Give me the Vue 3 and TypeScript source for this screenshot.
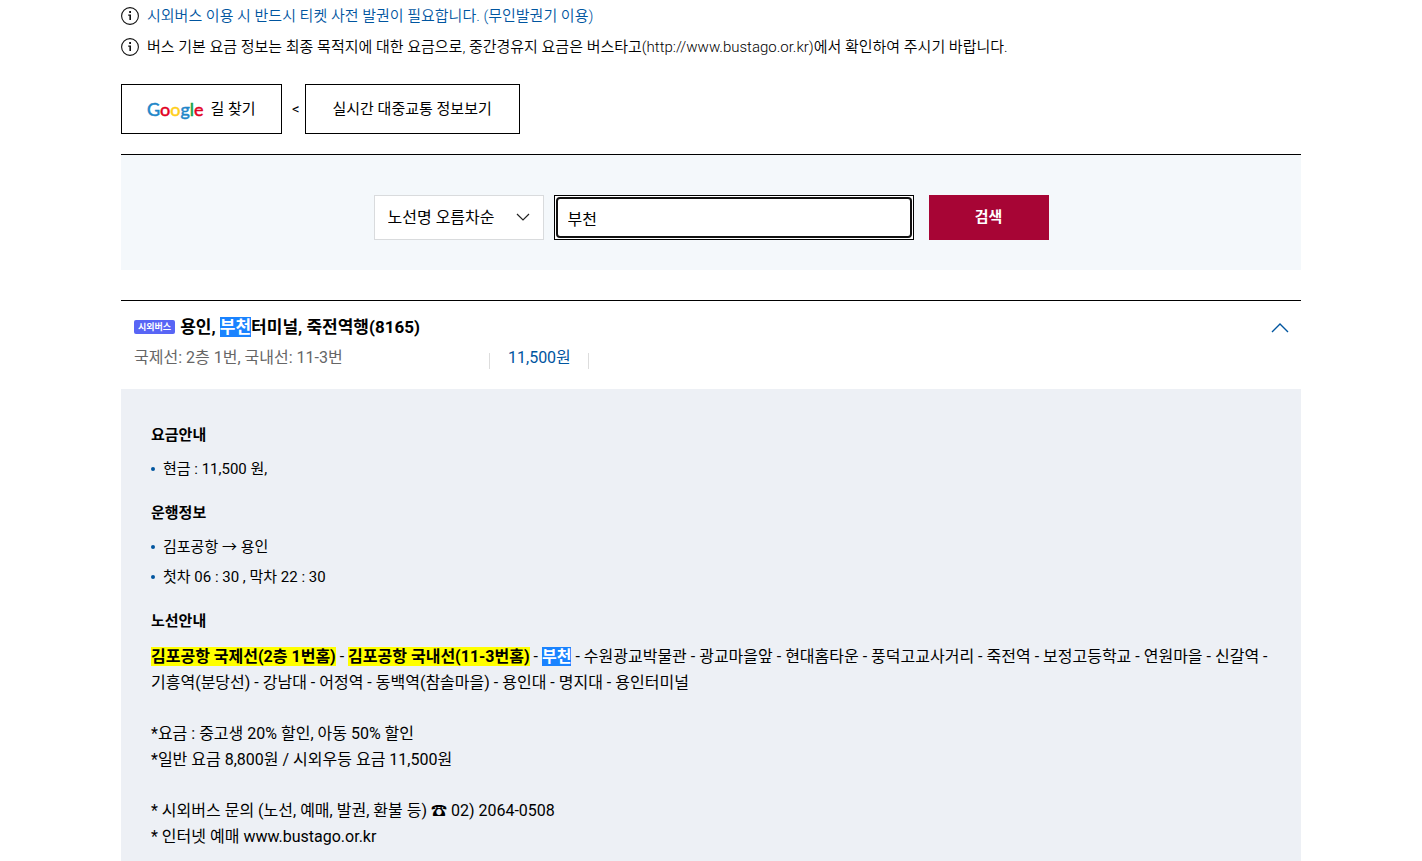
<script setup lang="ts">
import { ref } from 'vue'

const sort = ref('name-asc')
const keyword = ref('부천')
const open = ref(true)

const logo = [
  { ch: 'G', tone: '#1f87c9' },
  { ch: 'o', tone: '#e2001f' },
  { ch: 'o', tone: '#ffcf1b' },
  { ch: 'g', tone: '#1f87c9' },
  { ch: 'l', tone: '#12a049' },
  { ch: 'e', tone: '#e2001f' },
]
</script>

<template>
  <main class="page">
    <ul class="notices">
      <li class="notice notice-blue">
        <svg class="info" viewBox="0 0 18 18" aria-hidden="true">
          <circle cx="9" cy="9" r="8.4" fill="none" stroke="#111" stroke-width="1.1" />
          <rect x="8.2" y="4" width="1.8" height="2" fill="#111" />
          <path d="M7.2 7.500h2.800V13H8.400V8.700H7.200z" fill="#111" />
        </svg>
        <span>시외버스 이용 시 반드시 티켓 사전 발권이 필요합니다. (무인발권기 이용)</span>
      </li>
      <li class="notice">
        <svg class="info" viewBox="0 0 18 18" aria-hidden="true">
          <circle cx="9" cy="9" r="8.4" fill="none" stroke="#111" stroke-width="1.1" />
          <rect x="8.2" y="4" width="1.8" height="2" fill="#111" />
          <path d="M7.2 7.500h2.800V13H8.400V8.700H7.200z" fill="#111" />
        </svg>
        <span>버스 기본 요금 정보는 최종 목적지에 대한 요금으로, 중간경유지 요금은 버스타고(http://www.bustago.or.kr)에서 확인하여 주시기 바랍니다.</span>
      </li>
    </ul>

    <div class="links">
      <a class="link-box" href="#directions">
        <svg class="google" viewBox="0 0 56 24">
          <text x="0" y="19"><tspan v-for="(l, i) in logo" :key="i" :fill="l.tone" :stroke="l.tone">{{ l.ch }}</tspan></text>
        </svg>
        <span>길 찾기</span>
      </a>
      <span class="lt">&lt;</span>
      <a class="link-box link-wide" href="#transit">실시간 대중교통 정보보기</a>
    </div>

    <form class="search" @submit.prevent>
      <div class="select-wrap">
        <select v-model="sort" aria-label="정렬">
          <option value="name-asc">노선명 오름차순</option>
          <option value="name-desc">노선명 내림차순</option>
        </select>
        <svg class="chevron" viewBox="0 0 14 8" aria-hidden="true">
          <path d="M1 1l6 6 6-6" fill="none" stroke="#222" stroke-width="1.2" />
        </svg>
      </div>
      <div class="field">
        <input v-model="keyword" type="text" aria-label="검색어" />
      </div>
      <button class="submit" type="submit">검색</button>
    </form>

    <section class="result">
      <header class="summary">
        <div class="summary-main">
          <h2 class="title">
            <span class="badge">시외버스</span>
            <span>용인, <mark class="hit">부천</mark>터미널, 죽전역행(8165)</span>
          </h2>
          <div class="meta">
            <span class="stops">국제선: 2층 1번, 국내선: 11-3번</span>
            <span class="price">11,500원</span>
          </div>
        </div>
        <button class="toggle" type="button" aria-label="상세 정보" :aria-expanded="open" @click="open = !open">
          <svg viewBox="0 0 18 10" aria-hidden="true">
            <path d="M1 9l8-8 8 8" fill="none" stroke="#00559f" stroke-width="1.4" />
          </svg>
        </button>
      </header>

      <div v-if="open" class="detail">
        <h3>요금안내</h3>
        <ul>
          <li>현금 : 11,500 원,</li>
        </ul>
        <h3>운행정보</h3>
        <ul>
          <li>김포공항 → 용인</li>
          <li>첫차 06 : 30 , 막차 22 : 30</li>
        </ul>
        <h3>노선안내</h3>
        <div class="route">
          <p><b class="stop">김포공항 국제선(2층 1번홈)</b> - <b class="stop">김포공항 국내선(11-3번홈)</b> - <mark class="hit">부천</mark> - 수원광교박물관 - 광교마을앞 - 현대홈타운 - 풍덕고교사거리 - 죽전역 - 보정고등학교 - 연원마을 - 신갈역 - 기흥역(분당선) - 강남대 - 어정역 - 동백역(참솔마을) - 용인대 - 명지대 - 용인터미널</p>
          <p>*요금 : 중고생 20% 할인, 아동 50% 할인<br />*일반 요금 8,800원 / 시외우등 요금 11,500원</p>
          <p>* 시외버스 문의 (노선, 예매, 발권, 환불 등) ☎ 02) 2064-0508<br />* 인터넷 예매 www.bustago.or.kr</p>
        </div>
      </div>
    </section>
  </main>
</template>

<style>
body {
  margin: 0;
  background: #fff;
}
</style>

<style scoped>
* {
  box-sizing: border-box;
}

.page {
  display: flex;
  flex-direction: column;
  max-width: 1180px;
  min-height: 100vh;
  margin: 0 auto;
  color: #000;
  font-family: Roboto, "Noto Sans CJK KR", sans-serif;
  font-size: 16px;
  line-height: 1.6;
  word-break: keep-all;
}

ul,
h2,
h3,
p {
  margin: 0;
  padding: 0;
  list-style: none;
}

a {
  color: inherit;
  text-decoration: none;
}

button,
input,
select {
  font: inherit;
  color: inherit;
}

.notices {
  display: grid;
  gap: 7px;
  padding-top: 4px;
}

.notice {
  display: flex;
  align-items: center;
  gap: 8px;
  font-size: 15px;
  font-weight: 350;
  line-height: 24px;
}

.notice-blue {
  color: #00559f;
}

.info {
  flex: none;
  width: 18px;
  height: 18px;
}

.links {
  display: flex;
  align-items: center;
  margin: 25px 0 20px;
  font-size: 15px;
}

.link-box {
  display: flex;
  align-items: center;
  justify-content: center;
  gap: 7px;
  min-width: 161px;
  height: 50px;
  padding: 0 25px;
  border: 1px solid #000;
  background: #fff;
}

.link-wide {
  min-width: 215px;
}

.lt {
  padding: 0 5px 0 10px;
}

.google {
  width: 56px;
  height: 24px;
  overflow: visible;
  font-family: Lato, sans-serif;
  font-size: 18px;
  stroke-width: 0.5px;
}

.search {
  display: flex;
  justify-content: center;
  padding: 40px 0 30px;
  border-top: 1px solid #000;
  background: #f4f8fb;
}

.select-wrap {
  position: relative;
  width: 170px;
  height: 45px;
  margin-right: 10px;
}

select {
  width: 100%;
  height: 100%;
  padding: 0 32px 0 13px;
  border: 1px solid #d9dbdd;
  border-radius: 0;
  background: #fff;
  appearance: none;
}

.chevron {
  position: absolute;
  top: 18px;
  right: 14px;
  width: 14px;
  height: 8px;
  pointer-events: none;
}

.field {
  width: 360px;
  height: 45px;
  margin-right: 15px;
  padding: 1px;
  border: 1px solid #000;
  background: #fff;
}

input {
  display: block;
  width: 100%;
  height: 100%;
  padding: 0 10px;
  border: 2px solid #101010;
  border-radius: 4px;
  background: #fff;
  outline: none;
}

.submit {
  width: 120px;
  height: 45px;
  padding: 0 0 2px;
  border: 0;
  background: #a70535;
  color: #fff;
  font-size: 15px;
  font-weight: 700;
}

.result {
  display: flex;
  flex: 1;
  flex-direction: column;
  margin-top: 30px;
  border-top: 1px solid #000;
}

.summary {
  display: flex;
  justify-content: space-between;
  padding: 11px 12px 16px 13px;
}

.title {
  display: flex;
  align-items: center;
  gap: 5px;
  font-size: 17px;
  font-weight: 700;
  line-height: 30px;
}

.badge {
  padding: 0 4px;
  border-radius: 2px;
  background: #5865f5;
  color: #fff;
  font-size: 9px;
  line-height: 14px;
}

.hit {
  background: #1a83ff;
  color: #fff;
  font-weight: 700;
}

.meta {
  display: flex;
  padding-top: 1px;
  line-height: 30px;
}

.stops {
  width: 355px;
  color: #666;
}

.price {
  padding: 0 18px 0 19px;
  background:
    linear-gradient(#ddd, #ddd) left 10px / 1px 16px no-repeat,
    linear-gradient(#ddd, #ddd) right 10px / 1px 16px no-repeat;
  background-position: left 10px, right 10px;
  color: #00559f;
}

.toggle {
  align-self: flex-start;
  margin-top: 10px;
  padding: 0;
  border: 0;
  background: none;
}

.toggle svg {
  display: block;
  width: 18px;
  height: 12px;
}

.detail {
  flex: 1;
  padding: 31px 30px 11px;
  background: #edf0f5;
}

h3 {
  font-size: 15px;
  font-weight: 700;
  line-height: 30px;
}

.detail ul {
  padding: 4px 0 14px;
}

.detail li {
  display: flex;
  align-items: center;
  gap: 8px;
  font-size: 15px;
  line-height: 30px;
}

.detail li::before {
  width: 4px;
  height: 4px;
  border-radius: 50%;
  background: #00559f;
  content: "";
}

.route {
  display: grid;
  gap: 26px;
  padding-top: 8px;
}

.stop {
  background: #ff0;
}
</style>
